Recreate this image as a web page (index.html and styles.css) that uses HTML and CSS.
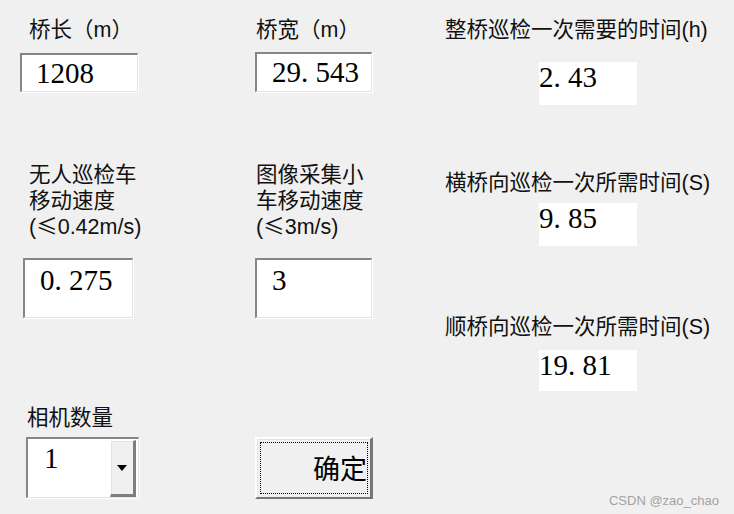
FILE: index.html
```html
<!DOCTYPE html>
<html lang="zh-CN">
<head>
<meta charset="utf-8">
<title>桥梁巡检计算</title>
<link rel="stylesheet" href="styles.css">
</head>
<body>
<div class="form">
  <div class="col col-a">
    <div class="lbl a-l1">桥长（m）</div>
    <div class="edit a-e1">1208</div>
    <div class="lbl multi a-l2">无人巡检车<br>移动速度<br>(<span class="le">≤</span>0.42m/s)</div>
    <div class="edit tall a-e2">0<span class="p">.</span>275</div>
    <div class="lbl a-l3">相机数量</div>
    <div class="combo">
      <div class="combo-val">1</div>
      <div class="combo-btn"><span class="arrow"></span></div>
    </div>
  </div>
  <div class="col col-b">
    <div class="lbl b-l1">桥宽（m）</div>
    <div class="edit b-e1">29<span class="p">.</span>543</div>
    <div class="lbl multi b-l2">图像采集小<br>车移动速度<br>(<span class="le">≤</span>3m/s)</div>
    <div class="edit tall b-e2">3</div>
    <div class="btn"><div class="btn-focus"><span class="btn-text">确定</span></div></div>
  </div>
  <div class="col col-c">
    <div class="lbl c-l1">整桥巡检一次需要的时间(h)</div>
    <div class="val c-v1">2<span class="p">.</span>43</div>
    <div class="lbl c-l2">横桥向巡检一次所需时间(S)</div>
    <div class="val c-v2">9<span class="p">.</span>85</div>
    <div class="lbl c-l3">顺桥向巡检一次所需时间(S)</div>
    <div class="val c-v3">19<span class="p">.</span>81</div>
  </div>
</div>
<div class="watermark">CSDN @zao_chao</div>
</body>
</html>
```

FILE: styles.css
```css
html, body {
  margin: 0;
  padding: 0;
}
body {
  width: 734px;
  height: 514px;
  background: #f0f0f0;
  overflow: hidden;
  position: relative;
  color: #000;
}
.form {
  display: grid;
  grid-template-columns: 255px 190px 289px;
  height: 514px;
}
.col {
  display: flex;
  flex-direction: column;
  align-items: flex-start;
  padding-top: 17px;
}
.lbl {
  font-family: "Liberation Sans", "Noto Sans CJK SC", sans-serif;
  font-size: 21.5px;
  line-height: 26px;
  white-space: nowrap;
  color: #111;
}
.multi {
  height: 78px;
}
.le {
  font-family: "Noto Sans CJK SC", sans-serif;
  line-height: 0;
}
.edit, .val, .combo-val {
  font-family: "Liberation Serif", "Times New Roman", serif;
  font-size: 29px;
  line-height: 30px;
  white-space: nowrap;
}
.p {
  letter-spacing: 0.25em;
}
.edit {
  box-sizing: border-box;
  background: #fff;
  border-top: 2px solid #868686;
  border-left: 2px solid #868686;
  border-right: 1px solid #e3e3e3;
  border-bottom: 1px solid #e3e3e3;
  box-shadow: 1px 1px 0 #fff;
  padding: 3px 0 0 15px;
}
.edit.tall {
  padding-top: 5px;
}
.val {
  background: #fff;
  width: 98px;
  height: 43px;
  margin-left: 94px;
}

/* column A */
.a-l1 { margin-left: 29px; }
.a-e1 { margin-left: 20px; margin-top: 10px; width: 118px; height: 39px; padding-left: 14px; }
.a-l2 { margin-left: 29px; margin-top: 70px; }
.a-e2 { margin-left: 23px; margin-top: 18px; width: 110px; height: 60px; }
.a-l3 { margin-left: 27px; margin-top: 87px; }

.combo {
  box-sizing: border-box;
  margin-left: 26px;
  margin-top: 6px;
  width: 113px;
  height: 61px;
  background: #fff;
  border-top: 2px solid #868686;
  border-left: 2px solid #868686;
  border-right: 1px solid #e3e3e3;
  border-bottom: 1px solid #e3e3e3;
  box-shadow: 1px 1px 0 #fff;
  display: flex;
}
.combo-val {
  flex: 1;
  padding: 4px 0 0 16px;
}
.combo-btn {
  box-sizing: border-box;
  width: 26px;
  height: 57px;
  margin-top: 1px;
  margin-right: 2px;
  background: #f0f0f0;
  border-top: 1px solid #fff;
  border-left: 1px solid #fff;
  border-right: 3px solid #7e7e7e;
  border-bottom: 3px solid #7e7e7e;
  box-shadow: inset 1px 1px 0 #e3e3e3;
  display: flex;
  align-items: center;
  justify-content: center;
}
.arrow {
  width: 0;
  height: 0;
  border-left: 5.5px solid transparent;
  border-right: 5.5px solid transparent;
  border-top: 6px solid #000;
  margin-top: 1px;
}

/* column B */
.b-l1 { margin-left: 1px; }
.b-e1 { margin-top: 9px; width: 117px; height: 40px; }
.b-l2 { margin-left: 1px; margin-top: 70px; }
.b-e2 { margin-top: 18px; width: 117px; height: 60px; }

.btn {
  box-sizing: border-box;
  margin-top: 119px;
  width: 118px;
  height: 62px;
  background: #f0f0f0;
  border-top: 2px solid #fff;
  border-left: 2px solid #fff;
  border-right: 3px solid #777;
  border-bottom: 2px solid #777;
  box-shadow: inset 1px 1px 0 #e3e3e3;
  padding: 3px 2px 3px 3px;
}
.btn-focus {
  box-sizing: border-box;
  height: 52px;
  border: 1px dotted #000;
  overflow: hidden;
  display: flex;
  align-items: center;
  justify-content: flex-end;
}
.btn-text {
  font-family: "Noto Sans CJK SC", sans-serif;
  font-size: 27px;
  line-height: 30px;
  margin-right: 0;
  white-space: nowrap;
}

/* column C */
.c-l1 { margin-left: 0; }
.c-v1 { margin-top: 19px; }
.c-l2 { margin-top: 65px; }
.c-v2 { margin-top: 7px; }
.c-l3 { margin-top: 68px; }
.c-v3 { margin-top: 10px; height: 41px; }

.watermark {
  position: absolute;
  right: 15px;
  bottom: 5px;
  font-family: "Liberation Sans", Arial, sans-serif;
  font-size: 13px;
  line-height: 16px;
  color: #a3a3a3;
  white-space: nowrap;
}
```
